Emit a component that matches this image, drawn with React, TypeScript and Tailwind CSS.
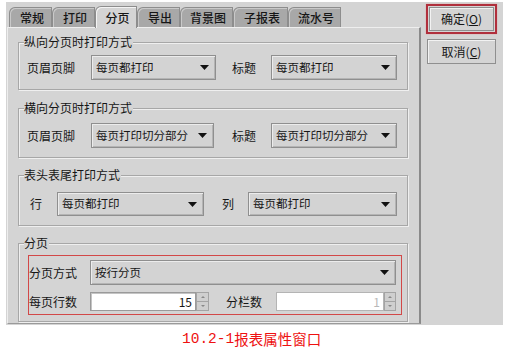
import React from "react";

const tabs = [
  { name: "常规", w: "w-[43px]" },
  { name: "打印", w: "w-[43px]" },
  { name: "分页", w: "w-[42px]", active: true },
  { name: "导出", w: "w-[43px]" },
  { name: "背景图", w: "w-[53px]" },
  { name: "子报表", w: "w-[55px]" },
  { name: "流水号", w: "w-[53px]" },
];

const Arrow = () => (
  <svg width="9" height="5" viewBox="0 0 9 5" className="shrink-0">
    <path d="M0 0h9L4.5 5z" fill="#111" />
  </svg>
);

// combo box look: flat gray with a thin bevel
const Select = ({ value, className }: { value: string; className: string }) => (
  <div
    className={`${className} flex items-center justify-between border border-[#8f8f8f] bg-[#d3d3d3] pl-[4px] pr-[6px] text-[11.5px] shadow-[inset_1px_1px_0_#ececec,inset_-1px_-1px_0_#b4b4b4]`}
  >
    <span>{value}</span>
    <Arrow />
  </div>
);

const Spinner = ({ className }: { className: string }) => (
  <div className={`${className} flex h-full flex-col`}>
    <div className="flex flex-1 items-center justify-center border border-[#a4a4a4] bg-[#cfcfcf]">
      <svg width="4" height="2" viewBox="0 0 4 2">
        <path d="M0 2L2 0L4 2z" fill="#888" />
      </svg>
    </div>
    <div className="flex flex-1 items-center justify-center border border-t-0 border-[#a4a4a4] bg-[#cfcfcf]">
      <svg width="4" height="2" viewBox="0 0 4 2">
        <path d="M0 0h4L2 2z" fill="#888" />
      </svg>
    </div>
  </div>
);

const Group = ({
  title,
  className,
  children,
}: {
  title: string;
  className: string;
  children: React.ReactNode;
}) => (
  <div
    className={`relative w-[390px] border border-[#a7a7a7] shadow-[inset_1px_1px_0_#efefef,1px_1px_0_#efefef] ${className}`}
  >
    <span className="absolute -top-[8px] left-[5px] bg-[#d4d4d4] pr-[1px] leading-[14px]">{title}</span>
    {children}
  </div>
);

export default function App() {
  return (
    <div className="h-[351px] w-[513px] bg-white font-['Noto_Sans_CJK_SC',sans-serif] text-[12px] leading-none text-[#161616]">
      <div className="ml-[6px] mt-[2px] flex h-[323px] w-[497px] bg-[#d4d4d4]">
        {/* tabs + page */}
        <div className="flex w-[415px] flex-col">
          <div className="flex h-[25px] items-end pl-[3px]">
            {tabs.map((t) =>
              t.active ? (
                <div
                  key={t.name}
                  className={`${t.w} relative z-10 -mb-[1px] flex h-[22px] items-center justify-center rounded-tl-[6px] border border-b-0 border-[#8d8d8d] bg-[#d4d4d4] pl-[3px] font-medium shadow-[inset_1px_1px_0_#f4f4f4]`}
                >
                  {t.name}
                </div>
              ) : (
                <div
                  key={t.name}
                  className={`${t.w} flex h-[20px] items-center justify-center rounded-tl-[6px] border border-b-0 border-[#8d8d8d] bg-[#a8a8a8] pl-[3px] font-medium shadow-[inset_1px_1px_0_#c9c9c9]`}
                >
                  {t.name}
                </div>
              )
            )}
          </div>

          <div className="ml-[1px] flex h-[297px] w-[414px] flex-col border-b border-l border-r-2 border-t border-b-[#9a9a9a] border-l-[#eeeeee] border-r-[#8a8a8a] border-t-[#eeeeee] pl-[10px] pt-[14px]">
            <Group title="纵向分页时打印方式" className="h-[48px] pt-[12px]">
              <div className="flex h-[25px] items-center pl-[8px]">
                <span className="w-[64px]">页眉页脚</span>
                <Select value="每页都打印" className="h-full w-[125px]" />
                <span className="ml-[16px] w-[39px]">标题</span>
                <Select value="每页都打印" className="h-full w-[126px]" />
              </div>
            </Group>

            <Group title="横向分页时打印方式" className="mt-[18px] h-[50px] pt-[14px]">
              <div className="flex h-[25px] items-center pl-[8px]">
                <span className="w-[64px]">页眉页脚</span>
                <Select value="每页打印切分部分" className="h-full w-[123px]" />
                <span className="ml-[18px] w-[39px]">标题</span>
                <Select value="每页打印切分部分" className="h-full w-[126px]" />
              </div>
            </Group>

            <Group title="表头表尾打印方式" className="mt-[17px] h-[51px] pt-[16px]">
              <div className="flex h-[24px] items-center pl-[11px]">
                <span className="w-[27px]">行</span>
                <Select value="每页都打印" className="h-full w-[147px]" />
                <span className="ml-[18px] w-[26px]">列</span>
                <Select value="每页都打印" className="h-full w-[149px]" />
              </div>
            </Group>

            <Group title="分页" className="mt-[17px] h-[79px] pl-[9px] pt-[11px]">
              <div className="flex h-[60px] w-[374px] flex-col border border-[#d24848] pt-[4px]">
                <div className="flex h-[25px] items-center">
                  <span className="w-[61px]">分页方式</span>
                  <Select value="按行分页" className="h-full w-[306px]" />
                </div>
                <div className="mt-[7px] flex h-[19px] items-center">
                  <span className="w-[61px]">每页行数</span>
                  <div className="flex h-full w-[106px] items-center justify-end border border-[#9a9a9a] bg-white pr-[3px] shadow-[inset_1px_1px_0_#c4c4c4]">
                    15
                  </div>
                  <Spinner className="w-[13px]" />
                  <span className="ml-[17px] w-[50px]">分栏数</span>
                  <div className="flex h-full w-[108px] items-center justify-end border border-[#b4b4b4] bg-white pr-[3px] text-[#b8b8b8]">
                    1
                  </div>
                  <Spinner className="w-[12px]" />
                </div>
              </div>
            </Group>
          </div>
        </div>

        {/* buttons */}
        <div className="flex flex-1 flex-col pl-[5px] pt-[2px]">
          <div className="h-[30px] w-[71px] border-2 border-[#b02f3c] p-px shadow-[0_0_1px_#e88]">
            <button className="flex h-full w-full items-center justify-center border border-[#8f8f8f] bg-[#d4d4d4] shadow-[inset_1px_1px_0_#f2f2f2]">
              确定(<span className="underline">O</span>)
            </button>
          </div>
          <button className="ml-[1px] mt-[5px] flex h-[25px] w-[69px] items-center justify-center border border-[#8f8f8f] bg-[#d4d4d4] shadow-[inset_1px_1px_0_#f2f2f2]">
            取消(<span className="underline">C</span>)
          </button>
        </div>
      </div>

      <div className="mt-[5px] flex h-[18px] items-center pl-[182px] text-[14.5px] text-[#ee1111]">
        <span className="font-['Liberation_Mono',monospace]">10.2-1</span>
        <span>报表属性窗口</span>
      </div>
    </div>
  );
}
